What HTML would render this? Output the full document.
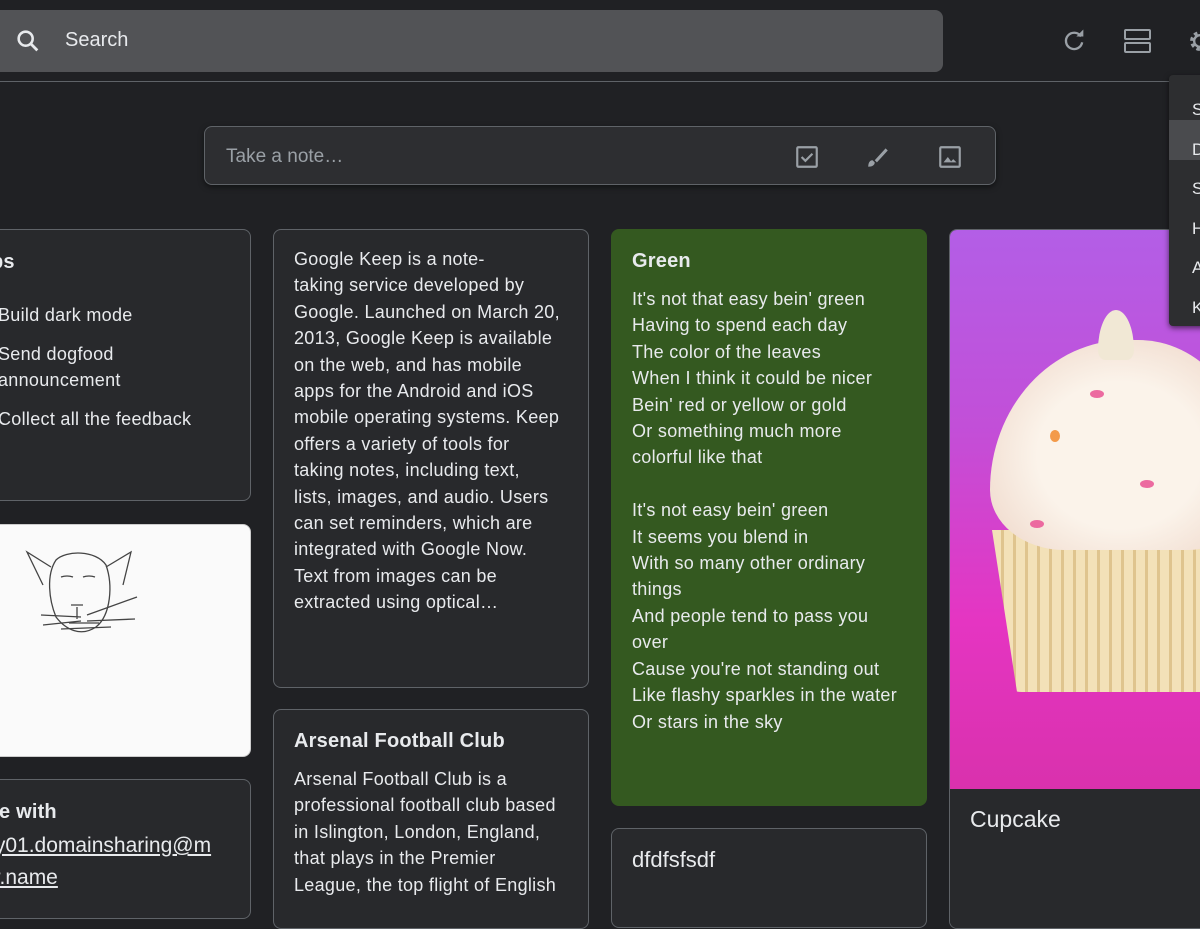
<!DOCTYPE html>
<html><head><meta charset="utf-8"><style>
*{box-sizing:border-box;margin:0;padding:0}
body{width:1200px;height:900px;overflow:hidden;background:#202124;font-family:"Liberation Sans",sans-serif;color:#e8eaed;position:relative}
.abs{position:absolute}
.card{position:absolute;border:1px solid #5f6368;border-radius:8px;background:#28292c;overflow:hidden}
.t{font-size:18px;line-height:26.4px;color:#e8eaed;white-space:nowrap;letter-spacing:0.3px}
.h{font-size:20px;font-weight:bold;color:#e8eaed;letter-spacing:0.2px}
</style></head><body>
<div class="abs" style="left:-10px;top:10px;width:953px;height:62px;background:#525356;border-radius:8px"></div>
<svg class="abs" style="left:14px;top:27px" width="28" height="28" viewBox="0 0 24 24"><circle cx="10" cy="10" r="6" fill="none" stroke="#e8eaed" stroke-width="2.2"/><path d="M14.5 14.5L20 20" stroke="#e8eaed" stroke-width="2.4"/></svg>
<div class="abs" style="left:65px;top:29px;font-size:20px;color:#e8eaed">Search</div>
<svg class="abs" style="left:1060px;top:26px" width="28" height="28" viewBox="0 0 24 24"><path d="M18 9A7 7 0 1 0 19 14" fill="none" stroke="#9aa0a6" stroke-width="2"/><path d="M14 9h6V3z" fill="#9aa0a6"/></svg>
<div class="abs" style="left:1124px;top:29px;width:27px;height:11px;border:2.5px solid #9aa0a6;border-radius:2px"></div>
<div class="abs" style="left:1124px;top:42px;width:27px;height:11px;border:2.5px solid #9aa0a6;border-radius:2px"></div>
<svg class="abs" style="left:1186px;top:27px" width="28" height="28" viewBox="0 0 24 24"><circle cx="12" cy="12" r="7" fill="none" stroke="#9aa0a6" stroke-width="3" stroke-dasharray="3 2.5"/><circle cx="12" cy="12" r="5" fill="none" stroke="#9aa0a6" stroke-width="2"/></svg>
<div class="abs" style="left:0;top:81px;width:1170px;height:1px;background:#5f6368"></div>
<div class="abs" style="left:204px;top:126px;width:792px;height:59px;background:#2d2e31;border:1px solid #5f6368;border-radius:8px;box-shadow:0 2px 6px rgba(0,0,0,.5)"></div>
<div class="abs" style="left:226px;top:146px;font-size:19px;color:#9aa0a6">Take a note…</div>
<svg class="abs" style="left:794px;top:144px" width="26" height="26" viewBox="0 0 24 24"><rect x="3" y="3" width="18" height="18" rx="1" fill="none" stroke="#9aa0a6" stroke-width="2"/><path d="M7 12l3.5 3.5L17 9" fill="none" stroke="#9aa0a6" stroke-width="2"/></svg>
<svg class="abs" style="left:865px;top:144px" width="26" height="26" viewBox="0 0 24 24"><path d="M3 21c3 0 6-1 6-4l-2-2c-3 0-4 3-4 6z M9 15l10-11 2 2-10 11z" fill="#9aa0a6"/></svg>
<svg class="abs" style="left:937px;top:144px" width="26" height="26" viewBox="0 0 24 24"><rect x="3" y="3" width="18" height="18" rx="1" fill="none" stroke="#9aa0a6" stroke-width="2"/><path d="M6 17l4-5 3 4 2-2 3 3z" fill="#9aa0a6"/></svg>

<div class="card" style="left:-20px;top:229px;width:271px;height:272px">
<div class="h abs" style="left:10px;top:21px">ps</div>
<div class="t abs" style="left:17px;top:72px">Build dark mode</div>
<div class="t abs" style="left:17px;top:111px">Send dogfood<br>announcement</div>
<div class="t abs" style="left:17px;top:176px">Collect all the feedback</div>
</div>
<div class="card" style="left:-20px;top:524px;width:271px;height:233px;background:#fafafa;border-color:#ccc">
<svg class="abs" style="left:40px;top:20px" width="120" height="100" viewBox="0 0 120 100"><g fill="none" stroke="#444" stroke-width="1.3"><path d="M35 15C45 5 75 5 85 20 92 40 90 70 75 82 60 92 45 85 35 72 28 55 25 30 35 15z"/><path d="M30 22L6 7 22 40M85 22L110 7 102 40"/><path d="M40 32q6-2 12 0M62 32q6-2 12 0M50 60h12M56 62v12M20 70l40 2M22 80l38-4M66 70l50-18M66 76l48-2M48 78h30M40 84l50-2"/></g></svg>
</div>
<div class="card" style="left:-20px;top:779px;width:271px;height:140px">
<div class="h abs" style="left:10px;top:21px">re with</div>
<div class="abs" style="left:8px;top:50px;font-size:21px;line-height:32px;text-decoration:underline;letter-spacing:0px">ty01.domainsharing@m<br>ir.name</div>
</div>

<div class="card" style="left:273px;top:229px;width:316px;height:459px">
<div class="t abs" style="left:20px;top:16px">Google Keep is a note-<br>taking service developed by<br>Google. Launched on March 20,<br>2013, Google Keep is available<br>on the web, and has mobile<br>apps for the Android and iOS<br>mobile operating systems. Keep<br>offers a variety of tools for<br>taking notes, including text,<br>lists, images, and audio. Users<br>can set reminders, which are<br>integrated with Google Now.<br>Text from images can be<br>extracted using optical…</div>
</div>
<div class="card" style="left:273px;top:709px;width:316px;height:220px">
<div class="h abs" style="left:20px;top:20px">Arsenal Football Club</div>
<div class="t abs" style="left:20px;top:56px">Arsenal Football Club is a<br>professional football club based<br>in Islington, London, England,<br>that plays in the Premier<br>League, the top flight of English</div>
</div>

<div class="card" style="left:611px;top:229px;width:316px;height:577px;background:#345920;border-color:#345920">
<div class="h abs" style="left:20px;top:20px">Green</div>
<div class="t abs" style="left:20px;top:56px">It's not that easy bein' green<br>Having to spend each day<br>The color of the leaves<br>When I think it could be nicer<br>Bein' red or yellow or gold<br>Or something much more<br>colorful like that<br><br>It's not easy bein' green<br>It seems you blend in<br>With so many other ordinary<br>things<br>And people tend to pass you<br>over<br>Cause you're not standing out<br>Like flashy sparkles in the water<br>Or stars in the sky</div>
</div>
<div class="card" style="left:611px;top:828px;width:316px;height:100px">
<div class="abs" style="left:20px;top:18px;font-size:22px">dfdfsfsdf</div>
</div>

<div class="card" style="left:949px;top:229px;width:280px;height:700px">
<div class="abs" style="left:0;top:0;width:280px;height:559px;background:linear-gradient(180deg,#b35ee6 0%,#c24fd8 35%,#e535c2 70%,#d931ad 100%)"></div>
<div class="abs" style="left:42px;top:300px;width:250px;height:162px;background:repeating-linear-gradient(90deg,#f3e1b8 0 9px,#dfc48e 9px 12px);border-radius:0 0 20px 30px;clip-path:polygon(0 0,100% 0,100% 100%,10% 100%)"></div>
<div class="abs" style="left:40px;top:110px;width:260px;height:210px;background:radial-gradient(ellipse at 50% 55%,#fbf3ea 45%,#f1ddd0 80%);border-radius:55% 45% 25% 30%/75% 65% 30% 30%"></div>
<div class="abs" style="left:100px;top:200px;width:10px;height:12px;background:#f39a4a;border-radius:50%"></div>
<div class="abs" style="left:190px;top:250px;width:14px;height:8px;background:#ec6aa0;border-radius:50%"></div>
<div class="abs" style="left:140px;top:160px;width:14px;height:8px;background:#ec6aa0;border-radius:50%"></div>
<div class="abs" style="left:80px;top:290px;width:14px;height:8px;background:#ec6aa0;border-radius:50%"></div>
<div class="abs" style="left:148px;top:80px;width:36px;height:50px;background:#f1e8d5;border-radius:50% 50% 20% 20%/80% 80% 20% 20%"></div>
<div class="abs" style="left:0;top:559px;width:280px;height:141px;background:#28292c"></div>
<div class="abs" style="left:20px;top:576px;font-size:23px">Cupcake</div>
</div>

<div class="abs" style="left:1169px;top:75px;width:40px;height:251px;background:#2d2e30;border-radius:4px;box-shadow:0 2px 6px rgba(0,0,0,.6)"></div>
<div class="abs" style="left:1169px;top:120px;width:40px;height:40px;background:#4a4b4e"></div>
<div class="abs" style="left:1192px;top:90px;font-size:17px;line-height:39.5px">S<br>D<br>S<br>H<br>A<br>K</div>
</body></html>
